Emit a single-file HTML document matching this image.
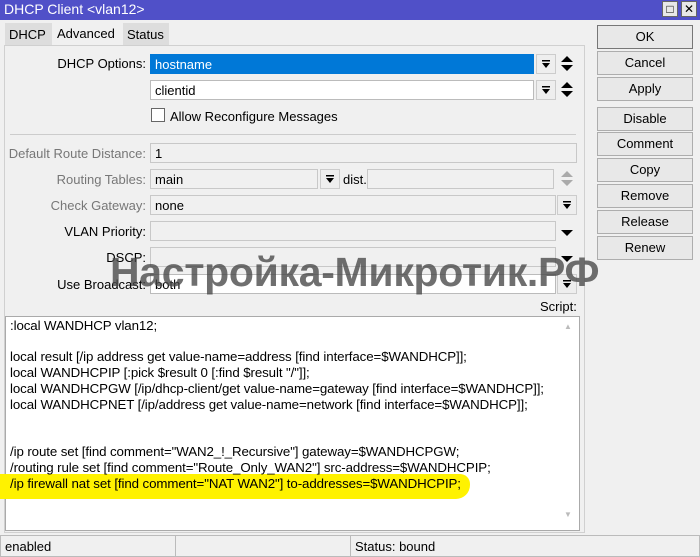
<!DOCTYPE html>
<html><head><meta charset="utf-8"><style>
*{box-sizing:border-box;margin:0;padding:0}
body{width:700px;height:557px;background:#f0f0f0;font-family:"Liberation Sans",Arial,sans-serif;font-size:13px;color:#000;position:relative;overflow:hidden}
.a{position:absolute}
.title{left:0;top:0;width:700px;height:20px;background:#5050c8;color:#fff;font-size:14px;padding:1px 4px}
.wb{top:1px;width:16px;height:16px;background:#e8e8e8;border:1px solid #666;color:#000;font-size:12px;text-align:center;line-height:14px}
.tab{top:23px;height:22px;background:#ddd;padding:4px 4px;font-size:13px}
.panel{left:4px;top:45px;width:581px;height:488px;border:1px solid #d0d0d0;background:#f0f0f0}
.lbl{text-align:right;width:146px;left:0;font-size:13px}
.g{color:#777}
.f{height:20px;border:1px solid #c8c8c8;background:#f0f0f0;padding:2px 4px;font-size:13px}
.w{background:#fff;border-color:#bbb}
.btn{left:597px;width:96px;height:24px;border:1px solid #adadad;background:#e8e8e8;text-align:center;line-height:22px;font-size:13px}
.dd{width:20px;height:20px;border:1px solid #ccc;background:#eee}
.dd svg,.ud svg{display:block}
.ta{left:5px;top:316px;width:575px;height:215px;background:#fff;border:1px solid #aaa}
.ln{left:10px;font-size:13.3px;white-space:nowrap;letter-spacing:-0.1px}
.sb{top:535px;height:22px;border:1px solid #bbb;padding:3px 4px;font-size:13px}
</style></head><body>
<div class="a title">DHCP Client &lt;vlan12&gt;</div>
<div class="a wb" style="left:662px">□</div>
<div class="a wb" style="left:681px">✕</div>
<div class="a tab" style="left:5px;width:47px">DHCP</div>
<div class="a" style="left:53px;top:22px;height:24px;padding:4px 4px;background:#f0f0f0">Advanced</div>
<div class="a tab" style="left:123px;width:46px">Status</div>
<div class="a panel"></div>

<div class="a lbl" style="top:56px">DHCP Options:</div>
<div class="a f" style="left:150px;top:54px;width:384px;background:#0078d7;border-color:#0078d7;color:#fff">hostname</div>
<div class="a dd" style="left:536px;top:54px"><svg width="18" height="18"><rect x="5" y="5" width="8" height="1.5"/><path d="M5 8h8l-4 5z"/></svg></div>
<div class="a ud" style="left:560px;top:54px"><svg width="14" height="20"><path d="M1 8h12L7 2zM1 11h12l-6 6z"/></svg></div>
<div class="a f w" style="left:150px;top:80px;width:384px">clientid</div>
<div class="a dd" style="left:536px;top:80px"><svg width="18" height="18"><rect x="5" y="5" width="8" height="1.5"/><path d="M5 8h8l-4 5z"/></svg></div>
<div class="a ud" style="left:560px;top:80px"><svg width="14" height="20"><path d="M1 8h12L7 2zM1 11h12l-6 6z"/></svg></div>
<div class="a" style="left:151px;top:108px;width:14px;height:14px;background:#fff;border:1px solid #666"></div>
<div class="a" style="left:170px;top:109px">Allow Reconfigure Messages</div>
<div class="a" style="left:10px;top:134px;width:566px;border-top:1px solid #ccc"></div>

<div class="a lbl g" style="top:146px">Default Route Distance:</div>
<div class="a f" style="left:150px;top:143px;width:427px">1</div>
<div class="a lbl g" style="top:172px">Routing Tables:</div>
<div class="a f" style="left:150px;top:169px;width:168px">main</div>
<div class="a dd" style="left:320px;top:169px"><svg width="18" height="18"><rect x="5" y="5" width="8" height="1.5"/><path d="M5 8h8l-4 5z"/></svg></div>
<div class="a" style="left:343px;top:172px">dist.</div>
<div class="a f" style="left:367px;top:169px;width:187px"></div>
<div class="a ud" style="left:560px;top:169px"><svg width="14" height="20"><path fill="#aaa" d="M1 8h12L7 2zM1 11h12l-6 6z"/></svg></div>
<div class="a lbl g" style="top:198px">Check Gateway:</div>
<div class="a f" style="left:150px;top:195px;width:406px">none</div>
<div class="a dd" style="left:557px;top:195px"><svg width="18" height="18"><rect x="5" y="5" width="8" height="1.5"/><path d="M5 8h8l-4 5z"/></svg></div>
<div class="a lbl" style="top:224px">VLAN Priority:</div>
<div class="a f" style="left:150px;top:221px;width:406px"></div>
<div class="a" style="left:560px;top:226px"><svg width="14" height="10"><path d="M1 2h12l-6 6z"/></svg></div>
<div class="a lbl" style="top:250px">DSCP:</div>
<div class="a f" style="left:150px;top:247px;width:406px"></div>
<div class="a" style="left:560px;top:252px"><svg width="14" height="10"><path d="M1 2h12l-6 6z"/></svg></div>
<div class="a lbl" style="top:277px">Use Broadcast:</div>
<div class="a f w" style="left:150px;top:274px;width:406px">both</div>
<div class="a dd" style="left:557px;top:274px"><svg width="18" height="18"><rect x="5" y="5" width="8" height="1.5"/><path d="M5 8h8l-4 5z"/></svg></div>
<div class="a" style="left:540px;top:299px">Script:</div>

<div class="a ta"></div>
<div class="a" style="left:0;top:474px;width:470px;height:25px;background:#fff200;border-radius:0 10px 14px 0"></div>
<div class="a" style="left:564px;top:322px;font-size:8px;color:#bbb">▲</div>
<div class="a" style="left:564px;top:510px;font-size:8px;color:#bbb">▼</div>
<div class="a ln" style="top:318px">:local WANDHCP vlan12;</div>
<div class="a ln" style="top:349px">local result [/ip address get value-name=address [find interface=$WANDHCP]];</div>
<div class="a ln" style="top:365px">local WANDHCPIP [:pick $result 0 [:find $result "/"]];</div>
<div class="a ln" style="top:381px">local WANDHCPGW [/ip/dhcp-client/get value-name=gateway [find interface=$WANDHCP]];</div>
<div class="a ln" style="top:397px">local WANDHCPNET [/ip/address get value-name=network [find interface=$WANDHCP]];</div>
<div class="a ln" style="top:444px">/ip route set [find comment="WAN2_!_Recursive"] gateway=$WANDHCPGW;</div>
<div class="a ln" style="top:460px">/routing rule set [find comment="Route_Only_WAN2"] src-address=$WANDHCPIP;</div>
<div class="a ln" style="top:476px">/ip firewall nat set [find comment="NAT WAN2"] to-addresses=$WANDHCPIP;</div>

<div class="a btn" style="top:25px;border-color:#777">OK</div>
<div class="a btn" style="top:51px">Cancel</div>
<div class="a btn" style="top:77px">Apply</div>
<div class="a btn" style="top:107px">Disable</div>
<div class="a btn" style="top:132px">Comment</div>
<div class="a btn" style="top:158px">Copy</div>
<div class="a btn" style="top:184px">Remove</div>
<div class="a btn" style="top:210px">Release</div>
<div class="a btn" style="top:236px">Renew</div>

<div class="a" style="left:110px;top:249px;font-size:41px;font-weight:bold;color:rgba(70,70,70,0.78);white-space:nowrap;letter-spacing:-0.3px">Настройка-Микротик.РФ</div>

<div class="a sb" style="left:0;width:176px">enabled</div>
<div class="a sb" style="left:175px;width:176px"></div>
<div class="a sb" style="left:350px;width:350px">Status: bound</div>
</body></html>
